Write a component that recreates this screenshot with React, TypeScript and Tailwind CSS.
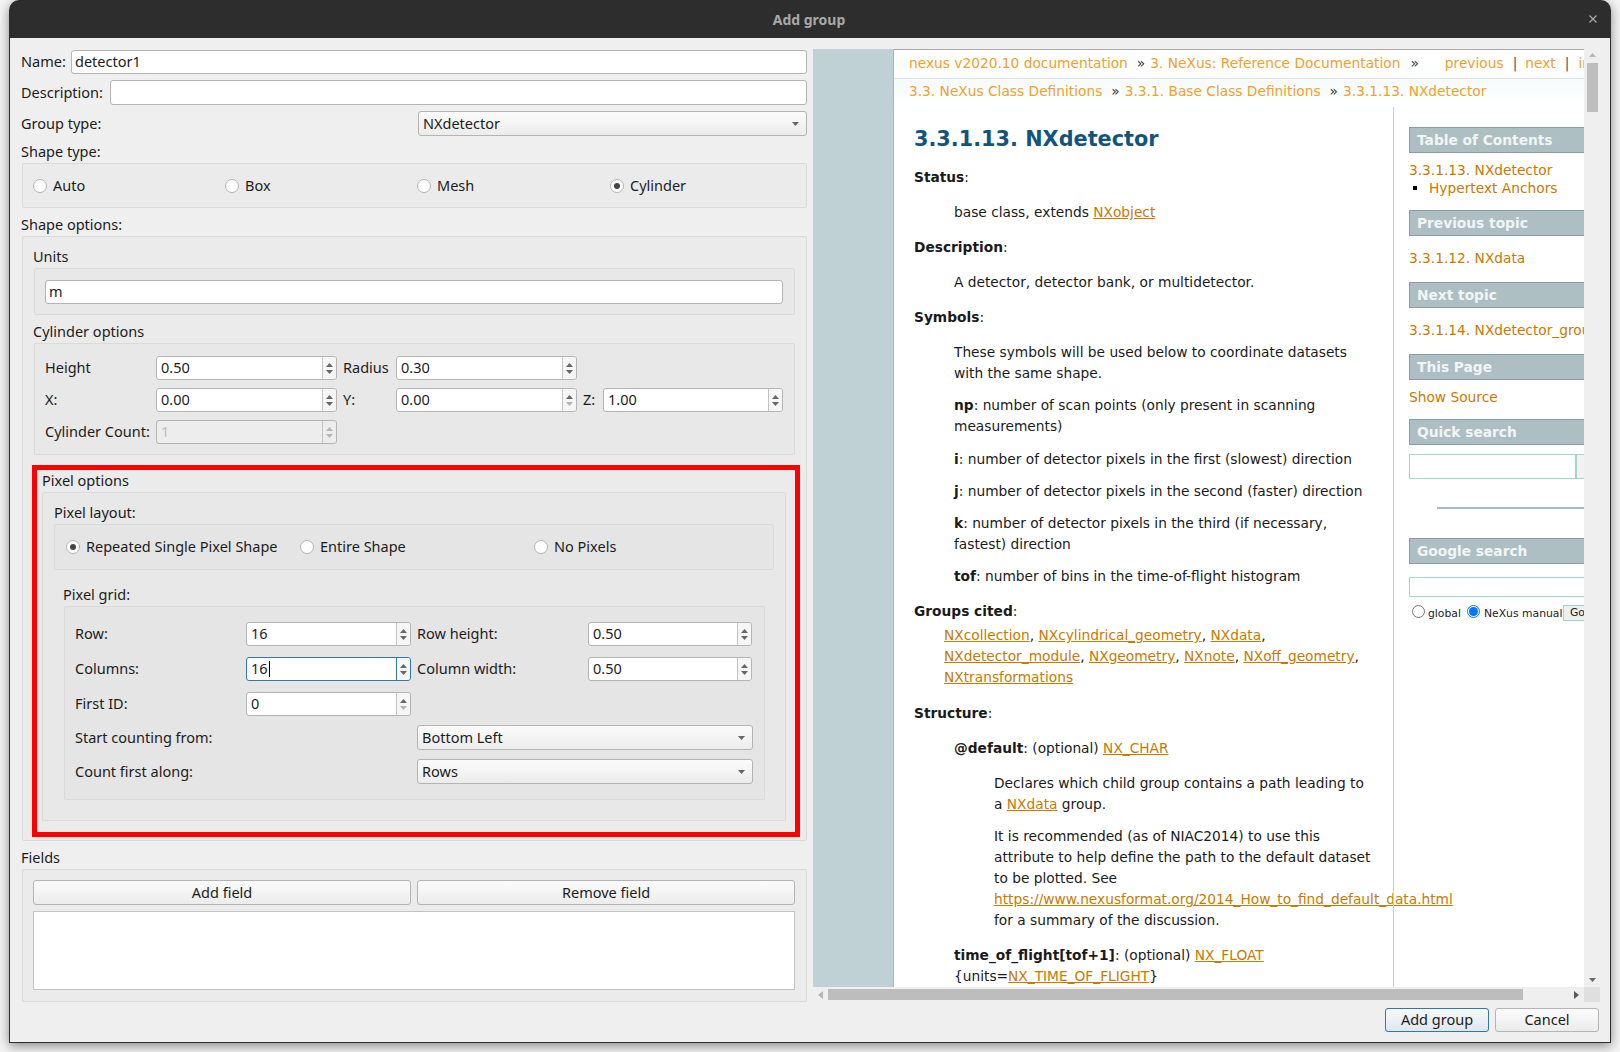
import type { ReactNode } from 'react'

const Up = ({ dim }: { dim?: boolean }) => (
  <svg width="7" height="4" viewBox="0 0 7 4"><path d="M3.5 0 L7 4 L0 4 Z" fill={dim ? '#b5b5b5' : '#666666'} /></svg>
)
const Down = ({ dim }: { dim?: boolean }) => (
  <svg width="7" height="4" viewBox="0 0 7 4"><path d="M0 0 L7 0 L3.5 4 Z" fill={dim ? '#b5b5b5' : '#666666'} /></svg>
)

const Spin = ({ value, width, focus, disabled, downDim, className = '' }: { value: string; width: string; focus?: boolean; disabled?: boolean; downDim?: boolean; className?: string }) => (
  <div className={`flex h-[24px] shrink-0 rounded-[3px] border ${width} ${focus ? 'border-[#2f78a8]' : 'border-[#b4b4b4]'} ${disabled ? 'bg-[#ededed]' : 'bg-white'} ${className}`}>
    <div className={`relative flex flex-1 items-center pl-[4px] ${disabled ? 'text-[#bdbdbd]' : ''}`}>
      {value}
      {focus && <span className="ml-px h-[16px] w-px bg-black" />}
    </div>
    <div className={`flex w-[14px] flex-col items-center justify-center gap-[3px] rounded-r-[3px] border-l ${focus ? 'border-[#2f78a8]' : 'border-[#c4c4c4]'} ${disabled ? 'bg-[#ededed]' : 'bg-[#f6f6f6]'}`}>
      <Up dim={disabled} />
      <Down dim={disabled || downDim} />
    </div>
  </div>
)

const Combo = ({ value, className = '' }: { value: string; className?: string }) => (
  <div className={`flex h-[25px] items-center justify-between rounded-[3px] border border-[#b4b4b4] bg-gradient-to-b from-[#fbfbfb] to-[#ececec] pl-[4px] pr-[7px] ${className}`}>
    {value}
    <Down />
  </div>
)

const Radio = ({ label, checked, className = '' }: { label: string; checked?: boolean; className?: string }) => (
  <div className={`flex items-center gap-[6px] ${className}`}>
    <span className="flex h-[14px] w-[14px] items-center justify-center rounded-full border border-[#b4b4b4] bg-white">
      {checked && <span className="h-[6px] w-[6px] rounded-full bg-[#444]" />}
    </span>
    {label}
  </div>
)

const Field = ({ value = '', className = '' }: { value?: string; className?: string }) => (
  <div className={`flex h-[24px] items-center rounded-[3px] border border-[#b4b4b4] bg-white pl-[3px] ${className}`}>{value}</div>
)

const Box = ({ children, className = '' }: { children: ReactNode; className?: string }) => (
  <div className={`rounded-[2px] border border-[#dadada] ${className}`}>{children}</div>
)

const Link = ({ children }: { children: ReactNode }) => <span className="text-[#ca7900] underline">{children}</span>

const Head = ({ children, className = '' }: { children: ReactNode; className?: string }) => (
  <div className={`flex h-[26px] items-center border border-[#8c9ea2] bg-[#aebfc3] pl-[7px] font-bold text-[#f2f5f5] ${className}`}>{children}</div>
)

const Left = () => (
  <div className="w-[803px] shrink-0 pl-[11px] pr-[3px] font-['Noto_Sans',sans-serif] text-[14.5px] text-[#1c1c1c]">
    <div className="mt-[12px] flex items-center">
      <span className="w-[50px]">Name:</span>
      <Field value="detector1" className="w-[736px]" />
    </div>
    <div className="mt-[6px] flex items-center">
      <span className="w-[89px]">Description:</span>
      <Field className="h-[25px] w-[697px]" />
    </div>
    <div className="mt-[6px] flex items-center">
      <span className="w-[397px]">Group type:</span>
      <Combo value="NXdetector" className="w-[389px]" />
    </div>
    <div className="mt-[4px] h-[23px] leading-[22px]">Shape type:</div>
    <Box className="ml-px flex h-[45px] w-[785px] items-center bg-[#ebebeb] pl-[10px]">
      <Radio label="Auto" className="w-[192px]" />
      <Radio label="Box" className="w-[192px]" />
      <Radio label="Mesh" className="w-[193px]" />
      <Radio label="Cylinder" checked />
    </Box>
    <div className="mt-[5px] h-[23px] leading-[22px]">Shape options:</div>
    <Box className="ml-px h-[605px] w-[785px] bg-[#ebebeb] pl-[11px] pr-[11px]">
      <div className="-ml-px mt-[8px] h-[23px] leading-[23px]">Units</div>
      <Box className="flex h-[47px] items-center bg-[#e8e8e8] pl-[10px] pr-[11px]">
        <Field value="m" className="w-full" />
      </Box>
      <div className="-ml-px mt-[5px] h-[23px] leading-[22px]">Cylinder options</div>
      <Box className="h-[112px] bg-[#e8e8e8] pl-[10px] pt-[12px]">
        <div className="flex items-center">
          <span className="w-[111px]">Height</span>
          <Spin value="0.50" width="w-[181px]" />
          <span className="ml-[6px] w-[53px]">Radius</span>
          <Spin value="0.30" width="w-[181px]" />
        </div>
        <div className="mt-[8px] flex items-center">
          <span className="w-[111px]">X:</span>
          <Spin value="0.00" width="w-[181px]" />
          <span className="ml-[6px] w-[53px]">Y:</span>
          <Spin value="0.00" width="w-[181px]" downDim />
          <span className="ml-[6px] w-[20px]">Z:</span>
          <Spin value="1.00" width="w-[180px]" />
        </div>
        <div className="mt-[8px] flex items-center">
          <span className="w-[111px] whitespace-nowrap">Cylinder Count:</span>
          <Spin value="1" width="w-[181px]" disabled />
        </div>
      </Box>
      <div className="-ml-[2px] mt-[10px] h-[372px] w-[768px] border-[5px] border-[#ff0000] pl-[5px] pr-[9px]">
        <div className="h-[22px] leading-[20px]">Pixel options</div>
        <Box className="h-[329px] w-[744px] bg-[#e8e8e8] pl-[11px] pr-[11px]">
          <div className="mt-[8px] h-[23px] leading-[23px]">Pixel layout:</div>
          <Box className="flex h-[46px] items-center bg-[#e5e5e5] pl-[11px]">
            <Radio label="Repeated Single Pixel Shape" checked className="w-[234px]" />
            <Radio label="Entire Shape" className="w-[234px]" />
            <Radio label="No Pixels" />
          </Box>
          <div className="ml-[9px] mt-[13px] h-[23px] leading-[22px]">Pixel grid:</div>
          <Box className="ml-[10px] h-[194px] w-[701px] bg-[#e5e5e5] pl-[10px] pt-[15px]">
            <div className="flex items-center">
              <span className="w-[171px]">Row:</span>
              <Spin value="16" width="w-[165px]" />
              <span className="ml-[6px] w-[171px]">Row height:</span>
              <Spin value="0.50" width="w-[164px]" />
            </div>
            <div className="mt-[11px] flex items-center">
              <span className="w-[171px]">Columns:</span>
              <Spin value="16" width="w-[165px]" focus />
              <span className="ml-[6px] w-[171px]">Column width:</span>
              <Spin value="0.50" width="w-[164px]" />
            </div>
            <div className="mt-[11px] flex items-center">
              <span className="w-[171px]">First ID:</span>
              <Spin value="0" width="w-[165px]" downDim />
            </div>
            <div className="mt-[9px] flex items-center">
              <span className="w-[342px]">Start counting from:</span>
              <Combo value="Bottom Left" className="w-[336px]" />
            </div>
            <div className="mt-[9px] flex items-center">
              <span className="w-[342px]">Count first along:</span>
              <Combo value="Rows" className="w-[336px]" />
            </div>
          </Box>
        </Box>
      </div>
    </Box>
    <div className="mt-[5px] h-[23px] leading-[22px]">Fields</div>
    <Box className="ml-px h-[133px] w-[785px] bg-[#ebebeb] px-[10px] pt-[10px]">
      <div className="flex gap-[6px]">
        <div className="flex h-[25px] w-[378px] items-center justify-center rounded-[3px] border border-[#b4b4b4] bg-gradient-to-b from-[#fbfbfb] to-[#ececec]">Add field</div>
        <div className="flex h-[25px] w-[378px] items-center justify-center rounded-[3px] border border-[#b4b4b4] bg-gradient-to-b from-[#fbfbfb] to-[#ececec]">Remove field</div>
      </div>
      <div className="mt-[6px] h-[79px] w-[762px] border border-[#c4c4c4] bg-white" />
    </Box>
  </div>
)

const Doc = () => (
  <div className="w-[499px] shrink-0 pl-[20px] pr-[20px]">
    <h1 className="mt-[15px] h-[34px] text-[20.8px] font-bold leading-[34px] text-[#11557c]">3.3.1.13. NXdetector</h1>
    <p className="mt-[11px]"><b>Status</b>:</p>
    <p className="ml-[40px] mt-[14px]">base class, extends <Link>NXobject</Link></p>
    <p className="mt-[14px]"><b>Description</b>:</p>
    <p className="ml-[40px] mt-[14px]">A detector, detector bank, or multidetector.</p>
    <p className="mt-[14px]"><b>Symbols</b>:</p>
    <div className="ml-[40px]">
      <p className="mt-[14px]">These symbols will be used below to coordinate datasets with the same shape.</p>
      <p className="mt-[11px]"><b>np</b>: number of scan points (only present in scanning measurements)</p>
      <p className="mt-[12px]"><b>i</b>: number of detector pixels in the first (slowest) direction</p>
      <p className="mt-[11px]"><b>j</b>: number of detector pixels in the second (faster) direction</p>
      <p className="mt-[11px]"><b>k</b>: number of detector pixels in the third (if necessary, fastest) direction</p>
      <p className="mt-[11px]"><b>tof</b>: number of bins in the time-of-flight histogram</p>
    </div>
    <p className="mt-[14px]"><b>Groups cited</b>:</p>
    <p className="ml-[30px] mt-[3px]">
      <Link>NXcollection</Link>, <Link>NXcylindrical_geometry</Link>, <Link>NXdata</Link>, <Link>NXdetector_module</Link>, <Link>NXgeometry</Link>, <Link>NXnote</Link>, <Link>NXoff_geometry</Link>, <Link>NXtransformations</Link>
    </p>
    <p className="mt-[15px]"><b>Structure</b>:</p>
    <div className="ml-[40px]">
      <p className="mt-[14px]"><b>@default</b>: (optional) <Link>NX_CHAR</Link></p>
      <div className="ml-[40px]">
        <p className="mt-[14px]">Declares which child group contains a path leading to a <Link>NXdata</Link> group.</p>
        <p className="mt-[11px]">It is recommended (as of NIAC2014) to use this attribute to help define the path to the default dataset to be plotted. See</p>
        <p className="whitespace-nowrap"><Link>https://www.nexusformat.org/2014_How_to_find_default_data.html</Link></p>
        <p>for a summary of the discussion.</p>
      </div>
      <p className="mt-[14px]"><b>time_of_flight[tof+1]</b>: (optional) <Link>NX_FLOAT</Link></p>
      <p>{'{units='}<Link>NX_TIME_OF_FLIGHT</Link>{'}'}</p>
    </div>
  </div>
)

const Side = () => (
  <div className="w-[300px] shrink-0 pl-[15px] pt-[20px] text-[#ca7900]">
    <Head>Table of Contents</Head>
    <p className="mt-[7px]">3.3.1.13. NXdetector</p>
    <div className="flex h-[16px] items-center pb-[2px]">
      <span className="ml-[4px] h-[4px] w-[4px] bg-black" />
      <span className="ml-[12px]">Hypertext Anchors</span>
    </div>
    <Head className="mt-[13px]">Previous topic</Head>
    <p className="mt-[12px]">3.3.1.12. NXdata</p>
    <Head className="mt-[13px]">Next topic</Head>
    <p className="mt-[12px]">3.3.1.14. NXdetector_group</p>
    <Head className="mt-[13px]">This Page</Head>
    <p className="mt-[7px]">Show Source</p>
    <Head className="mt-[11px]">Quick search</Head>
    <div className="mt-[9px] flex h-[25px]">
      <div className="w-[167px] border border-[#98dbcc]" />
      <div className="w-[60px] border border-[#98dbcc] bg-[#f2f2f2]" />
    </div>
    <div className="ml-[28px] mt-[28px] h-[2px] w-[200px] bg-[#a8bacd]" />
    <Head className="mt-[29px]">Google search</Head>
    <div className="mt-[13px] h-[20px] w-[240px] border border-[#98dbcc]" />
    <div className="mt-[7px] flex items-center text-[10.8px] leading-[16px] text-[#222]">
      <span className="ml-[3px] -mt-[3px] h-[13px] w-[13px] rounded-full border border-[#767676] bg-white" />
      <span className="ml-[3px] mt-[2px] w-[39px]">global</span>
      <span className="-mt-[3px] flex h-[13px] w-[13px] items-center justify-center rounded-full border border-[#0075ff] bg-white">
        <span className="h-[9px] w-[9px] rounded-full bg-[#0075ff]" />
      </span>
      <span className="ml-[4px] mt-[2px] w-[79px] whitespace-nowrap">NeXus manual</span>
      <span className="flex h-[16px] w-[40px] items-center border border-[#98dbcc] bg-[#efefef] pl-[6px]">Go</span>
    </div>
  </div>
)

const WebView = () => (
  <div className="flex h-[938px] w-[771px] overflow-hidden bg-[#bfd1d4]">
    <div className="w-[80px] shrink-0" />
    <div className="flex min-w-0 flex-1 flex-col overflow-hidden border-l border-[#a6b6b9] bg-white font-['DejaVu_Sans',sans-serif] text-[13.76px] leading-[21px] text-[#1a1a1a]">
      <div className="h-[58px] shrink-0 whitespace-nowrap border-t border-[#aaaaaa] bg-gradient-to-b from-[#ffffff] to-[#fbfcfc] text-[#f0a02c]">
        <div className="flex h-[29px] items-center border-b border-[#e2e8ea] pb-[2px] pl-[15px]">
          <span>nexus v2020.10 documentation</span>
          <span className="ml-[9px] text-[#333]">»</span>
          <span className="ml-[5px]">3. NeXus: Reference Documentation</span>
          <span className="ml-[10px] text-[#333]">»</span>
          <span className="ml-[26px]">previous</span>
          <span className="ml-[9px] text-[#555]">|</span>
          <span className="ml-[8px]">next</span>
          <span className="ml-[9px] text-[#555]">|</span>
          <span className="ml-[9px]">index</span>
        </div>
        <div className="flex h-[28px] items-center bg-gradient-to-b from-[#f6fafb] to-[#ffffff] pb-[4px] pl-[15px]">
          <span>3.3. NeXus Class Definitions</span>
          <span className="ml-[9px] text-[#333]">»</span>
          <span className="ml-[5px]">3.3.1. Base Class Definitions</span>
          <span className="ml-[9px] text-[#333]">»</span>
          <span className="ml-[5px]">3.3.1.13. NXdetector</span>
        </div>
      </div>
      <div className="flex w-[1000px] flex-1">
        <Doc />
        <div className="w-px shrink-0 bg-[#cccccc]" />
        <Side />
      </div>
    </div>
  </div>
)

const VScroll = () => (
  <div className="flex h-[938px] w-[16px] flex-col items-center bg-[#efefef] pt-[4px]">
    <Up dim />
    <div className="mt-[6px] h-[49px] w-[11px] bg-[#bdbdbd]" />
    <div className="mt-auto mb-[5px]"><Down /></div>
  </div>
)

const HScroll = () => (
  <div className="flex h-[15px] items-center">
    <div className="flex h-[15px] w-[771px] items-center bg-[#efefef] pl-[5px]">
      <svg width="5" height="8" viewBox="0 0 5 8"><path d="M5 0 L5 8 L0 4 Z" fill="#b5b5b5" /></svg>
      <div className="ml-[5px] h-[11px] w-[695px] bg-[#bdbdbd]" />
      <svg className="ml-[51px]" width="5" height="8" viewBox="0 0 5 8"><path d="M0 0 L5 4 L0 8 Z" fill="#5a5a5a" /></svg>
    </div>
    <div className="h-[15px] w-[16px] bg-[#dfdfdf]" />
  </div>
)

export default function App() {
  return (
    <div className="h-[1052px] w-[1620px] overflow-hidden bg-[#f4f4f4] pl-[9px]">
      <div className="flex h-[1043px] w-[1602px] flex-col rounded-t-[10px] shadow-[0_3px_12px_rgba(0,0,0,0.45)]">
        <div className="flex h-[38px] shrink-0 items-center rounded-t-[10px] bg-[#2d2d2d] font-['Noto_Sans',sans-serif] text-[14px] font-bold text-[#a8a8a8]">
          <div className="flex-1 pl-[20px] text-center">Add group</div>
          <svg className="mr-[14px]" width="8" height="8" viewBox="0 0 8 8"><path d="M0.5 0.5 L7.5 7.5 M7.5 0.5 L0.5 7.5" stroke="#a8a8a8" strokeWidth="1.2" /></svg>
        </div>
        <div className="flex flex-1 border-x border-b border-[#2d2d2d] bg-[#efefef]">
          <Left />
          <div className="flex flex-col pt-[11px]">
            <div className="flex">
              <WebView />
              <VScroll />
            </div>
            <HScroll />
            <div className="mt-[6px] flex justify-end gap-[6px] pr-px font-['Noto_Sans',sans-serif] text-[14.5px] text-[#1c1c1c]">
              <div className="flex h-[24px] w-[104px] items-center justify-center rounded-[3px] border border-[#2f78a8] bg-gradient-to-b from-[#f7f9fb] to-[#dfe7ee]">Add group</div>
              <div className="flex h-[24px] w-[104px] items-center justify-center rounded-[3px] border border-[#b4b4b4] bg-gradient-to-b from-[#fbfbfb] to-[#ececec]">Cancel</div>
            </div>
          </div>
        </div>
      </div>
    </div>
  )
}
